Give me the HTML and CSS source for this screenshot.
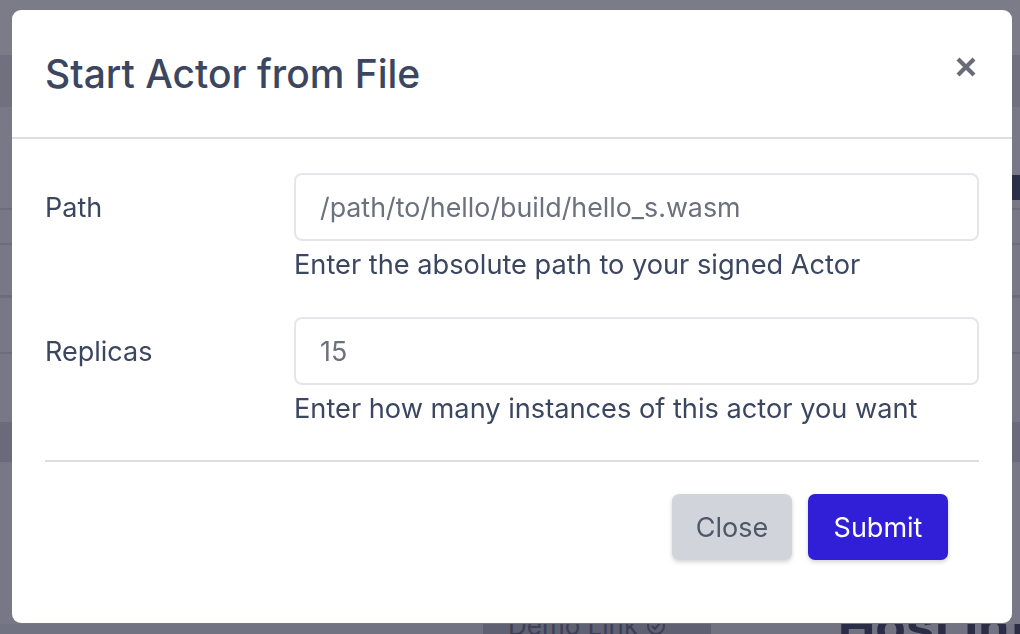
FILE: index.html
```html
<!DOCTYPE html>
<html lang="en">
<head>
<meta charset="utf-8">
<title>Start Actor from File</title>
<link rel="stylesheet" href="styles.css">
</head>
<body>
<div class="page">
  <div class="band band-top"></div>
  <div class="band band-nav"></div>
  <div class="band band-c"><span class="dark-btn"></span></div>
  <div class="band band-d"></div>
  <div class="band band-e"></div>
  <div class="band band-f"></div>
  <div class="band band-g"></div>
  <div class="band band-h"></div>
  <div class="band band-i"></div>
  <div class="footer">
    <div class="demo">Demo Link
      <svg class="demo-icon" viewBox="0 0 20 20" width="20" height="20"><circle cx="10" cy="10" r="8" fill="none" stroke="#3c3f56" stroke-width="2"/><path d="M6 10l3 3 5-6" fill="none" stroke="#3c3f56" stroke-width="2"/></svg>
    </div>
    <div class="host">Host Info</div>
  </div>
</div>

<div class="overlay">
  <div class="modal">
    <div class="modal-header">
      <h2 class="modal-title">Start Actor from File</h2>
      <button class="close-x" aria-label="Close">
        <svg viewBox="0 0 22 22" width="22" height="22"><path d="M3 3L19 19M19 3L3 19" stroke="#6b6b78" stroke-width="4.2" stroke-linecap="butt"/></svg>
      </button>
    </div>
    <div class="modal-body">
      <div class="field">
        <div class="label-cell"><label class="label" for="path">Path</label></div>
        <div class="control">
          <input class="input" id="path" type="text" value="/path/to/hello/build/hello_s.wasm">
          <div class="help">Enter the absolute path to your signed Actor</div>
        </div>
      </div>
      <div class="field">
        <div class="label-cell"><label class="label" for="replicas">Replicas</label></div>
        <div class="control">
          <input class="input" id="replicas" type="text" value="15">
          <div class="help">Enter how many instances of this actor you want</div>
        </div>
      </div>
      <div class="divider"></div>
      <div class="actions">
        <button class="btn btn-close">Close</button>
        <button class="btn btn-submit">Submit</button>
      </div>
    </div>
  </div>
</div>
</body>
</html>
```

FILE: styles.css
```css
* { box-sizing: border-box; }
html, body { margin: 0; padding: 0; }
body {
  width: 1020px;
  height: 634px;
  overflow: hidden;
  font-family: Inter, "Noto Sans", sans-serif;
  background: #777785;
}
.page {
  display: flex;
  flex-direction: column;
  height: 634px;
}
.band { flex: none; }
.band-top { height: 55px; background: #7c7c88; }
.band-nav { height: 52px; background: #70707e; }
.band-c { height: 103px; background: #787886; border-bottom: 2px solid #6c6c7a; display: flex; justify-content: flex-end; }
.dark-btn { width: 40px; height: 25px; margin-top: 68px; background: #2b2f48; }
.band-d { height: 35px; background: #777785; border-bottom: 2px solid #6c6c7a; }
.band-e { height: 53px; background: #777785; border-bottom: 3px solid #6c6c7a; }
.band-f { height: 56px; background: #777785; border-bottom: 2px solid #6c6c7a; }
.band-g { height: 68px; background: #777785; }
.band-h { height: 40px; background: #6a6a7a; }
.band-i { height: 162px; background: #777785; }
.footer {
  flex: none;
  height: 40px;
  display: flex;
  align-items: flex-start;
  background: #717282;
  overflow: hidden;
}
.demo {
  flex: none;
  margin-left: 483px;
  width: 228px;
  height: 40px;
  background: #5f6072;
  color: #3c3f56;
  font-size: 26px;
  line-height: 40px;
  padding-left: 25px;
  margin-top: -18px;
  display: flex;
  align-items: center;
  gap: 8px;
}
.host {
  flex: none;
  margin-left: 127px;
  margin-top: -26px;
  font-size: 50px;
  font-weight: 700;
  color: #2a2d45;
  line-height: 56px;
  white-space: nowrap;
}

.overlay {
  position: fixed;
  inset: 0;
  padding: 10px 8px 11px 12px;
  display: flex;
}
.modal {
  width: 1000px;
  height: 613px;
  background: #fff;
  border-radius: 9px;
  display: flex;
  flex-direction: column;
  color: #3b4660;
}
.modal-header {
  height: 129px;
  flex: none;
  border-bottom: 2px solid #dcdce1;
  display: flex;
  align-items: center;
  justify-content: space-between;
  padding: 0 33px;
}
.modal-title {
  margin: 0;
  font-size: 39px;
  font-weight: 500;
  color: #3b4660;
}
.close-x {
  border: 0;
  background: none;
  padding: 0;
  margin: -14px 2px 0 0;
  width: 22px;
  height: 22px;
  display: flex;
}
.modal-body {
  padding: 34px 33px 0 33px;
}
.field {
  display: grid;
  grid-template-columns: 249px 1fr;
  margin-bottom: 36px;
}
.label-cell {
  height: 68px;
  display: flex;
  align-items: center;
}
.label {
  font-size: 27px;
  color: #3b4660;
}
.control { display: flex; flex-direction: column; }
.input {
  height: 68px;
  width: 100%;
  border: 2px solid #e5e6ea;
  border-radius: 8px;
  padding: 0 24px;
  font-family: Inter, "Noto Sans", sans-serif;
  font-size: 26.8px;
  color: #6b717d;
  background: #fff;
  outline: none;
}
.help {
  margin-top: 8px;
  font-size: 27.2px;
  line-height: 32px;
  color: #3b4660;
}
.divider {
  height: 2px;
  background: #dcdce1;
  margin-top: -1px;
}
.actions {
  display: flex;
  justify-content: flex-end;
  gap: 16px;
  padding: 32px 31px 0 0;
}
.btn {
  height: 66px;
  border: 0;
  border-radius: 7px;
  font-family: Inter, "Noto Sans", sans-serif;
  font-size: 27px;
  box-shadow: 0 2px 4px rgba(0,0,0,0.18);
}
.btn-close { width: 120px; background: #d1d5db; color: #4f5868; }
.btn-submit { width: 140px; background: #301fd6; color: #fff; }
```
